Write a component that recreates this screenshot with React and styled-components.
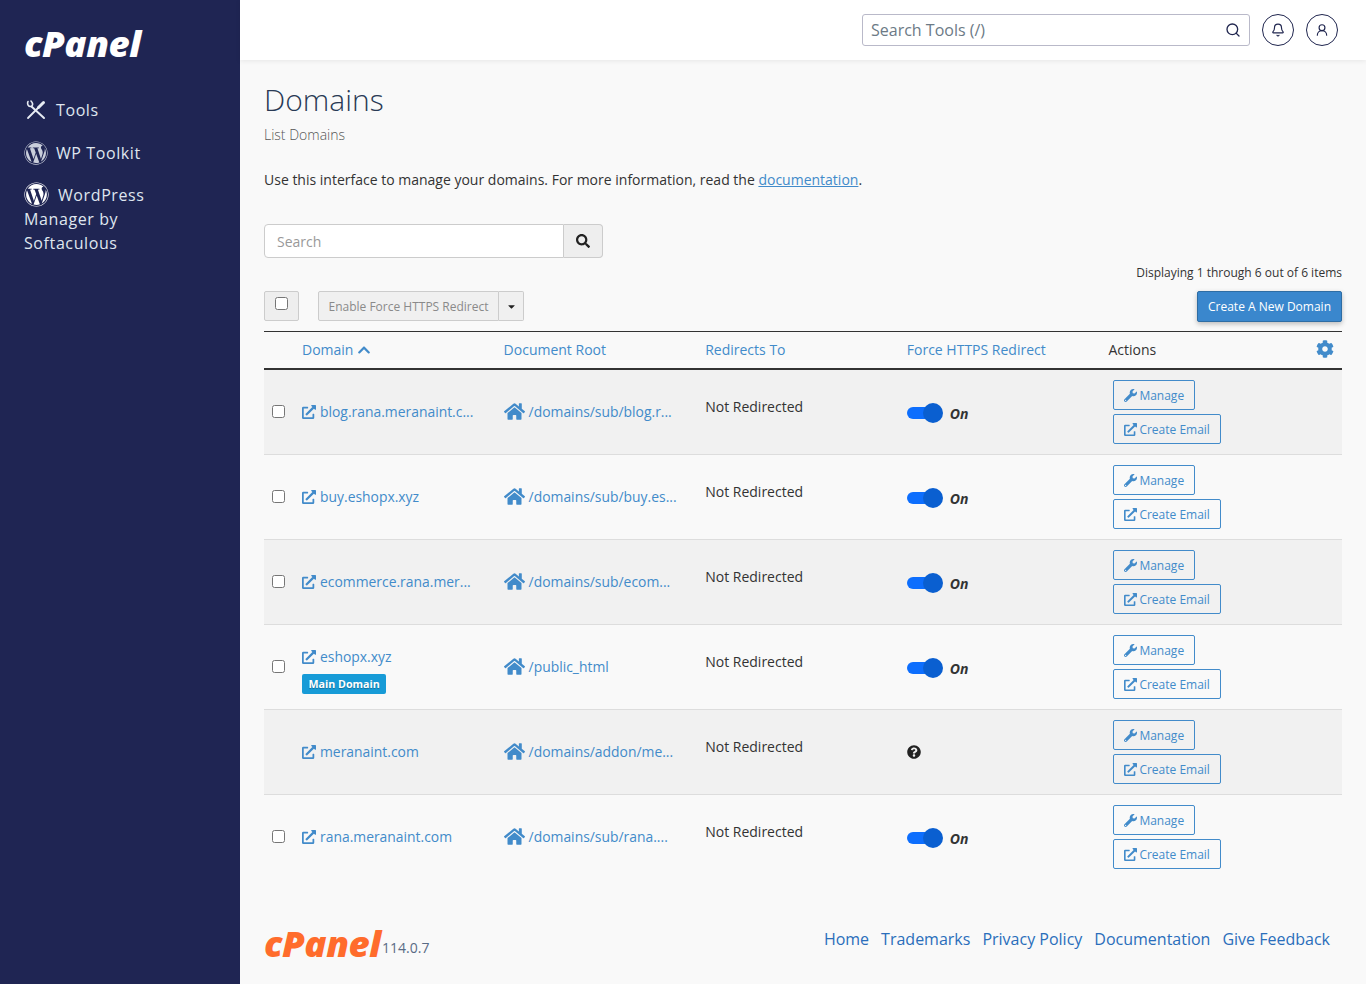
import React from "react"
import styled, { createGlobalStyle } from "styled-components"
import { FaWordpress, FaSearch, FaChevronUp, FaCog, FaExternalLinkAlt, FaHome, FaWrench, FaQuestionCircle, FaCaretDown } from "react-icons/fa"
import { Bell, UserRound, Search as SearchLine } from "lucide-react"

const rows = [
  { domain: "blog.rana.meranaint.c...", root: "/domains/sub/blog.r..." },
  { domain: "buy.eshopx.xyz", root: "/domains/sub/buy.es..." },
  { domain: "ecommerce.rana.mer...", root: "/domains/sub/ecom..." },
  { domain: "eshopx.xyz", root: "/public_html", main: true },
  { domain: "meranaint.com", root: "/domains/addon/me...", locked: true },
  { domain: "rana.meranaint.com", root: "/domains/sub/rana...." },
]

const footerLinks = ["Home", "Trademarks", "Privacy Policy", "Documentation", "Give Feedback"]

const ToolsIcon = () => (
  <svg width="22" height="20" viewBox="0 0 22 20" fill="none" stroke="#e6ebf2" strokeLinecap="round">
    <path d="M6.5 6.5 L19 18" strokeWidth="2" />
    <path d="M3 1.5 C2 4 3 7 6.5 6.5 C8 5 8 3 6 1" strokeWidth="1.6" />
    <path d="M3 18 L13 8" strokeWidth="1.8" />
    <path d="M13.5 7.5 L18.5 2.5" strokeWidth="3" />
  </svg>
)

const App = () => (
  <Page>
    <GlobalStyle />
    <Sidebar>
      <SideLogo>cPanel</SideLogo>
      <SideNav>
        <SideItem>
          <ToolsSlot><ToolsIcon /></ToolsSlot>
          Tools
        </SideItem>
        <SideItem>
          <FaWordpress size={24} color="#c9cedb" />
          WP Toolkit
        </SideItem>
        <SideWrap>
          <FaWordpress size={25} color="#fff" />
          WordPress Manager by Softaculous
        </SideWrap>
      </SideNav>
    </Sidebar>

    <Main>
      <TopBar>
        <ToolSearch>
          <ToolInput placeholder="Search Tools (/)" />
          <SearchLine size={16} color="#20264f" />
        </ToolSearch>
        <RoundBtn><Bell size={14} /></RoundBtn>
        <RoundBtn><UserRound size={14} /></RoundBtn>
      </TopBar>

      <Content>
        <Title>Domains</Title>
        <SubTitle>List Domains</SubTitle>
        <Intro>
          Use this interface to manage your domains. For more information, read the <a href="#doc">documentation</a>.
        </Intro>

        <SearchGroup>
          <SearchInput placeholder="Search" />
          <SearchBtn><FaSearch size={14} /></SearchBtn>
        </SearchGroup>

        <Paging>Displaying 1 through 6 out of 6 items</Paging>

        <Toolbar>
          <ToolbarLeft>
            <SelectAll><input type="checkbox" /></SelectAll>
            <BulkGroup>
              <BulkBtn>Enable Force HTTPS Redirect</BulkBtn>
              <CaretBtn><FaCaretDown size={11} /></CaretBtn>
            </BulkGroup>
          </ToolbarLeft>
          <PrimaryBtn>Create A New Domain</PrimaryBtn>
        </Toolbar>

        <Table>
          <HeadRow>
            <span />
            <HeadLink>Domain <FaChevronUp size={14} /></HeadLink>
            <HeadLink>Document Root</HeadLink>
            <HeadLink>Redirects To</HeadLink>
            <HeadLink>Force HTTPS Redirect</HeadLink>
            <HeadActions>
              Actions
              <FaCog size={18} color="#428bca" />
            </HeadActions>
          </HeadRow>

          {rows.map((row, index) => (
            <Row key={index} $striped={index % 2 === 0}>
              <CheckCell>{!row.locked && <input type="checkbox" />}</CheckCell>
              <DomainCell $main={row.main}>
                <CellLink>
                  <FaExternalLinkAlt size={14} />
                  {row.domain}
                </CellLink>
                {row.main && <Badge>Main Domain</Badge>}
              </DomainCell>
              <RootLink>
                <FaHome size={21} />
                {row.root}
              </RootLink>
              <RedirectCell>Not Redirected</RedirectCell>
              <ForceCell $locked={row.locked}>
                {row.locked ? (
                  <FaQuestionCircle size={14} color="#222" />
                ) : (
                  <>
                    <Toggle />
                    <OnLabel>On</OnLabel>
                  </>
                )}
              </ForceCell>
              <ActionCell>
                <ActionBtn><FaWrench size={13} /> Manage</ActionBtn>
                <ActionBtn><FaExternalLinkAlt size={13} /> Create Email</ActionBtn>
              </ActionCell>
            </Row>
          ))}
        </Table>
      </Content>

      <Footer>
        <FooterBrand>
          <FootLogo>cPanel</FootLogo>
          <Version>114.0.7</Version>
        </FooterBrand>
        <FooterLinks>
          {footerLinks.map((link) => (
            <a href="#f" key={link}>{link}</a>
          ))}
        </FooterLinks>
      </Footer>
    </Main>
  </Page>
)

export default App

const GlobalStyle = createGlobalStyle`
  html, body {
    margin: 0;
    padding: 0;
    font-family: "Open Sans", "Noto Sans", sans-serif;
    font-size: 14px;
    color: #333;
  }
  input[type="checkbox"] {
    display: block;
    margin: 0;
    width: 13px;
    height: 13px;
  }
`

const Page = styled.div`
  display: flex;
  width: 1366px;
  height: 984px;
  overflow: hidden;
  background: #f9f9f9;
`

const Sidebar = styled.aside`
  width: 240px;
  flex: none;
  background: #1f2553;
  padding: 24px 24px 0;
  box-sizing: border-box;
  color: #dfe6ef;
`

const SideLogo = styled.div`
  width: 118px;
  font-family: "Open Sans", sans-serif;
  font-weight: 800;
  font-style: italic;
  font-size: 35px;
  line-height: 40px;
  letter-spacing: -0.5px;
  white-space: nowrap;
  color: #fff;
  transform: scaleX(1.05);
  transform-origin: left center;
`

const SideNav = styled.nav`
  margin-top: 33px;
  display: flex;
  flex-direction: column;
  gap: 18px;
  font-size: 16px;
  letter-spacing: 0.6px;
`

const SideItem = styled.div`
  display: flex;
  align-items: center;
  gap: 8px;
  height: 25px;
`

const ToolsSlot = styled.span`
  display: flex;
  width: 24px;
  justify-content: center;
`

const SideWrap = styled.div`
  margin-top: -1px;
  width: 130px;
  line-height: 24px;

  svg {
    vertical-align: -6px;
    margin-right: 9px;
  }
`

const Main = styled.div`
  flex: 1;
  min-width: 0;
  display: flex;
  flex-direction: column;
`

const TopBar = styled.header`
  height: 60px;
  flex: none;
  background: #fff;
  box-shadow: 0 1px 5px rgba(0, 0, 0, 0.08);
  display: flex;
  align-items: center;
  justify-content: flex-end;
  gap: 12px;
  padding-right: 28px;
`

const ToolSearch = styled.div`
  width: 388px;
  height: 32px;
  box-sizing: border-box;
  border: 1px solid #b9b9c9;
  border-radius: 3px;
  background: #fff;
  display: flex;
  align-items: center;
  padding: 0 8px;
`

const ToolInput = styled.input`
  flex: 1;
  min-width: 0;
  border: 0;
  outline: 0;
  padding: 0;
  font: 16px "Open Sans", sans-serif;

  &::placeholder {
    color: #6c7a86;
    opacity: 1;
  }
`

const RoundBtn = styled.button`
  width: 32px;
  height: 32px;
  padding: 0;
  border: 1px solid #20264f;
  border-radius: 50%;
  background: #fff;
  color: #20264f;
  display: flex;
  align-items: center;
  justify-content: center;
`

const Content = styled.main`
  padding: 0 24px;
`

const Title = styled.h1`
  margin: 20px 0 0;
  font-size: 30px;
  line-height: 40px;
  font-weight: 300;
  color: #293a55;
`

const SubTitle = styled.div`
  margin-top: 5px;
  font-size: 14px;
  line-height: 20px;
  font-weight: 300;
  color: #555;
`

const Intro = styled.p`
  margin: 25px 0 0;
  font-size: 14px;
  line-height: 20px;

  a {
    color: #428bca;
  }
`

const SearchGroup = styled.div`
  display: flex;
  margin-top: 34px;
  width: 339px;
  height: 34px;
`

const SearchInput = styled.input`
  width: 300px;
  box-sizing: border-box;
  border: 1px solid #ccc;
  border-radius: 4px 0 0 4px;
  padding: 0 12px;
  font: 14px "Open Sans", sans-serif;
  background: #fff;

  &::placeholder {
    color: #999;
    opacity: 1;
  }
`

const SearchBtn = styled.button`
  flex: 1;
  border: 1px solid #ccc;
  border-left: 0;
  border-radius: 0 4px 4px 0;
  background: #eee;
  color: #222;
  padding: 0;
  display: flex;
  align-items: center;
  justify-content: center;
`

const Paging = styled.div`
  margin-top: 6px;
  text-align: right;
  font-size: 12px;
  line-height: 17px;
`

const Toolbar = styled.div`
  margin-top: 10px;
  height: 40px;
  display: flex;
  justify-content: space-between;
  align-items: flex-start;
`

const ToolbarLeft = styled.div`
  display: flex;
  gap: 19px;
`

const SelectAll = styled.div`
  width: 35px;
  height: 30px;
  box-sizing: border-box;
  border: 1px solid #ccc;
  border-radius: 2px;
  background: #eee;
  padding: 5px 0 0 10px;
`

const BulkGroup = styled.div`
  display: flex;
  height: 30px;
`

const BulkBtn = styled.button`
  width: 181px;
  border: 1px solid #ccc;
  border-radius: 2px 0 0 2px;
  background: #f0f0f0;
  color: #8a8a8a;
  font: 12px "Open Sans", sans-serif;
  padding: 0;
`

const CaretBtn = styled.button`
  width: 25px;
  border: 1px solid #ccc;
  border-left: 0;
  border-radius: 0 2px 2px 0;
  background: #f0f0f0;
  color: #222;
  padding: 2px 0 0;
`

const PrimaryBtn = styled.button`
  width: 145px;
  height: 31px;
  border: 1px solid #2e6da4;
  border-radius: 2px;
  background: #3a87cd;
  color: #fff;
  font: 12px "Open Sans", sans-serif;
  padding: 0;
  box-shadow: 0 2px 5px rgba(0, 0, 0, 0.25);
`

const columns = "30px repeat(4, 201.6px) 1fr"

const Table = styled.div`
  border-top: 1px solid #333;
`

const HeadRow = styled.div`
  display: grid;
  grid-template-columns: ${columns};
  height: 36px;
  align-items: center;
  border-bottom: 2px solid #333;

  > * {
    margin-bottom: 2px;
  }
`

const HeadLink = styled.a`
  color: #428bca;
  padding-left: 8px;

  svg {
    vertical-align: -2px;
  }
`

const HeadActions = styled.div`
  display: flex;
  justify-content: space-between;
  align-items: center;
  padding: 0 8px;
`

const Row = styled.div`
  display: grid;
  grid-template-columns: ${columns};
  height: 85px;
  box-sizing: border-box;
  align-items: center;
  background: ${({ $striped }) => ($striped ? "#f1f1f1" : "#f9f9f9")};
  border-bottom: 1px solid #ddd;

  &:last-child {
    border-bottom-color: #f9f9f9;
  }
`

const CheckCell = styled.div`
  padding: 0 0 2px 8px;
  display: flex;
`

const DomainCell = styled.div`
  align-self: start;
  padding: ${({ $main }) => ($main ? "22px" : "32px")} 0 0 8px;
  display: flex;
  flex-direction: column;
  align-items: flex-start;
  gap: 8px;
`

const CellLink = styled.a`
  color: #428bca;
  font-size: 13.9px;
  display: flex;
  align-items: center;
  gap: 4px;
  white-space: nowrap;
`

const Badge = styled.span`
  background: #179bd7;
  color: #fff;
  border-radius: 2px;
  font-size: 10.7px;
  line-height: 20px;
  font-weight: 700;
  padding: 0 6.5px;
  text-shadow: 0 1px 1px rgba(0, 0, 0, 0.3);
`

const RootLink = styled(CellLink)`
  padding: 0 0 2px 8px;
`

const RedirectCell = styled.div`
  padding: 0 0 12px 8px;
`

const ForceCell = styled.div`
  padding: ${({ $locked }) => ($locked ? "0 0 0 8px" : "2px 0 0 8px")};
  display: flex;
  align-items: center;
  gap: 7px;
`

const Toggle = styled.span`
  position: relative;
  display: block;
  width: 32px;
  height: 12px;
  margin-right: 4px;
  border-radius: 6px;
  background: #0d6efd;

  &::after {
    content: "";
    position: absolute;
    top: -4px;
    right: -4px;
    width: 20px;
    height: 20px;
    border-radius: 50%;
    background: #0a5fd0;
  }
`

const OnLabel = styled.span`
  font-weight: 700;
  font-style: italic;
  font-size: 14px;
`

const ActionCell = styled.div`
  padding-left: 13px;
  display: flex;
  flex-direction: column;
  align-items: flex-start;
  gap: 4px;
`

const ActionBtn = styled.button`
  height: 30px;
  box-sizing: border-box;
  border: 1px solid #428bca;
  border-radius: 2px;
  background: transparent;
  color: #428bca;
  font: 12px "Open Sans", sans-serif;
  padding: 0 10px;
  display: flex;
  align-items: center;
  gap: 2px;
`

const Footer = styled.footer`
  margin-top: 49px;
  padding: 0 36px 0 24px;
  display: flex;
  justify-content: space-between;
`

const FooterBrand = styled.div`
  display: flex;
  align-items: flex-start;
`

const FootLogo = styled(SideLogo)`
  color: #ff6c2c;
  margin-top: -5px;
`

const Version = styled.span`
  margin-top: 9px;
  font-size: 14px;
  line-height: 20px;
  color: #596b85;
`

const FooterLinks = styled.div`
  display: flex;
  gap: 12px;
  font-size: 16px;
  line-height: 20px;

  a {
    color: #2a6ebb;
    text-decoration: none;
  }
`
